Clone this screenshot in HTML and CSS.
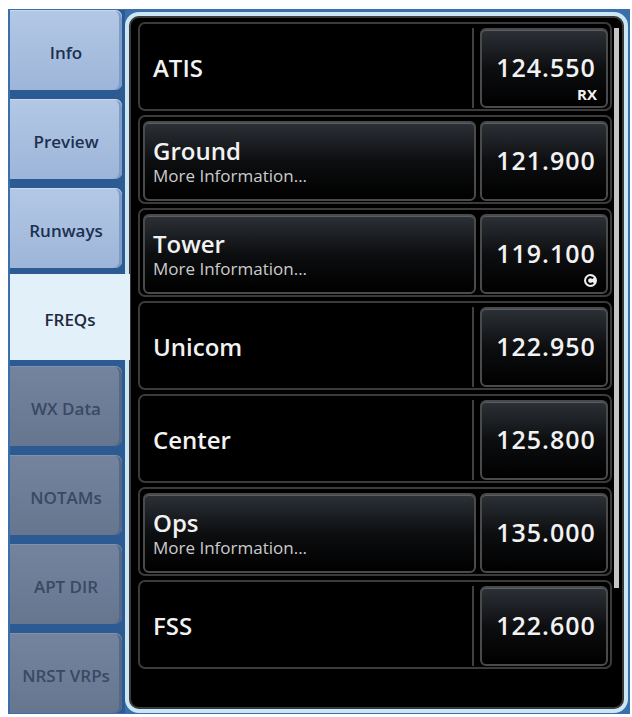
FILE: index.html
```html
<!DOCTYPE html>
<html lang="en">
<head>
<meta charset="UTF-8">
<meta name="viewport" content="width=device-width, initial-scale=1.0">
<title>Airport FREQs</title>
<link rel="stylesheet" href="styles.css">
</head>
<body>

<div class="unit">
    <nav class="tabs">
        <div class="tab">Info</div>
        <div class="tab">Preview</div>
        <div class="tab">Runways</div>
        <div class="tab active">FREQs</div>
        <div class="tab off">WX Data</div>
        <div class="tab off">NOTAMs</div>
        <div class="tab off">APT DIR</div>
        <div class="tab off">NRST VRPs</div>
    </nav>

    <section class="panel">
        <div class="list">
            <div class="row">
                <div class="name plain"><span class="title">ATIS</span></div>
                <div class="freq">124.550<span class="tag">RX</span></div>
            </div>
            <div class="row">
                <div class="name btn"><span class="title">Ground</span><span class="sub">More Information...</span></div>
                <div class="freq">121.900</div>
            </div>
            <div class="row">
                <div class="name btn"><span class="title">Tower</span><span class="sub">More Information...</span></div>
                <div class="freq">119.100
                    <svg class="tag ctaf" width="13" height="13" viewBox="0 0 12 12">
                        <circle cx="6" cy="6" r="6" fill="#eeeeee"/>
                        <path d="M8.4 4.1 A3.1 3.1 0 1 0 8.4 7.9" stroke="#000" stroke-width="1.9" fill="none"/>
                    </svg>
                </div>
            </div>
            <div class="row">
                <div class="name plain"><span class="title">Unicom</span></div>
                <div class="freq">122.950</div>
            </div>
            <div class="row">
                <div class="name plain"><span class="title">Center</span></div>
                <div class="freq">125.800</div>
            </div>
            <div class="row">
                <div class="name btn"><span class="title">Ops</span><span class="sub">More Information...</span></div>
                <div class="freq">135.000</div>
            </div>
            <div class="row">
                <div class="name plain"><span class="title">FSS</span></div>
                <div class="freq">122.600</div>
            </div>
        </div>
        <div class="scroll"><div class="thumb"></div></div>
    </section>
</div>

</body>
</html>
```

FILE: styles.css
```css
body {
    margin: 0;
    background: #ffffff;
    font-family: "Open Sans", "Noto Sans", sans-serif;
}
.unit {
    margin: 9px 0 0 8px;
    width: 622px;
    height: 705px;
    box-sizing: border-box;
    padding: 1px 2px 1px 2px;
    display: flex;
    background: #3b6fab;
}

/* side tabs */
.tabs {
    width: 115px;
    display: flex;
    flex-direction: column;
    gap: 9px;
    background: #2c5a92;
}
.tab {
    height: 80px;
    width: 112px;
    box-sizing: border-box;
    display: flex;
    align-items: center;
    justify-content: center;
    border-radius: 0 7px 7px 0;
    background: linear-gradient(#b3c8e5, #9db5d9);
    box-shadow: inset 0 1px 0 #c9d8ee, inset -3px 0 0 #7f9cc7;
    color: #1c3050;
    font-size: 17px;
    font-weight: 600;
    padding-top: 4px;
}
.tab.off {
    background: linear-gradient(#74849f, #66768f);
    box-shadow: inset 0 1px 0 #8291aa, inset -3px 0 0 #56688a;
    color: #3a4862;
}
.tab.active {
    width: 120px;
    height: 86px;
    margin: -3px 0 -3px 0;
    border-radius: 0;
    background: #e2f0fa;
    box-shadow: none;
    color: #1d2a3d;
    position: relative;
    z-index: 1;
}

/* frequency list */
.panel {
    flex: 1;
    margin-top: 2px;
    border: 4px solid #cde6f4;
    border-radius: 14px;
    background: #000;
    box-shadow: inset 0 0 0 2px #3a3a3a;
    display: flex;
    padding: 6px 5px 0 9px;
}
.list {
    flex: 1;
    display: flex;
    flex-direction: column;
    gap: 4px;
}
.row {
    height: 89px;
    box-sizing: border-box;
    display: flex;
    gap: 4px;
    padding: 4px 2px 1px 3px;
    border: 2px solid #3b3b3b;
    border-radius: 7px;
}
.name {
    flex: 1;
    display: flex;
    flex-direction: column;
    justify-content: center;
    color: #f2f2f2;
}
.name.plain {
    padding-left: 10px;
    margin-right: 2px;
    border-right: 2px solid #404040;
}
.name.btn {
    padding-left: 8px;
    border: 2px solid #4a4a4a;
    border-radius: 6px;
    background: linear-gradient(#2c3137, #0d0e10 50%, #000);
    box-shadow: inset 0 1px 0 #5a5f66;
}
.title {
    font-size: 24px;
    font-weight: 600;
    line-height: 28px;
}
.sub {
    font-size: 17px;
    color: #cccccc;
    line-height: 21px;
}
.freq {
    width: 128px;
    box-sizing: border-box;
    position: relative;
    display: flex;
    align-items: center;
    justify-content: center;
    border: 2px solid #4a4a4a;
    border-radius: 6px;
    background: linear-gradient(#2c3137, #0d0e10 50%, #000);
    box-shadow: inset 0 1px 0 #5a5f66;
    color: #f2f2f2;
    font-size: 25px;
    font-weight: 600;
    letter-spacing: 1px;
    padding: 0 0 3px 4px;
}
.tag {
    position: absolute;
    right: 9px;
    bottom: 2px;
    font-size: 15px;
    font-weight: 700;
    letter-spacing: 0;
}
.ctaf {
    right: 9px;
    bottom: 5px;
}

/* scrollbar */
.scroll {
    width: 5px;
    margin-left: 2px;
    padding-top: 6px;
}
.thumb {
    height: 560px;
    background: #c4c4c4;
}
```
